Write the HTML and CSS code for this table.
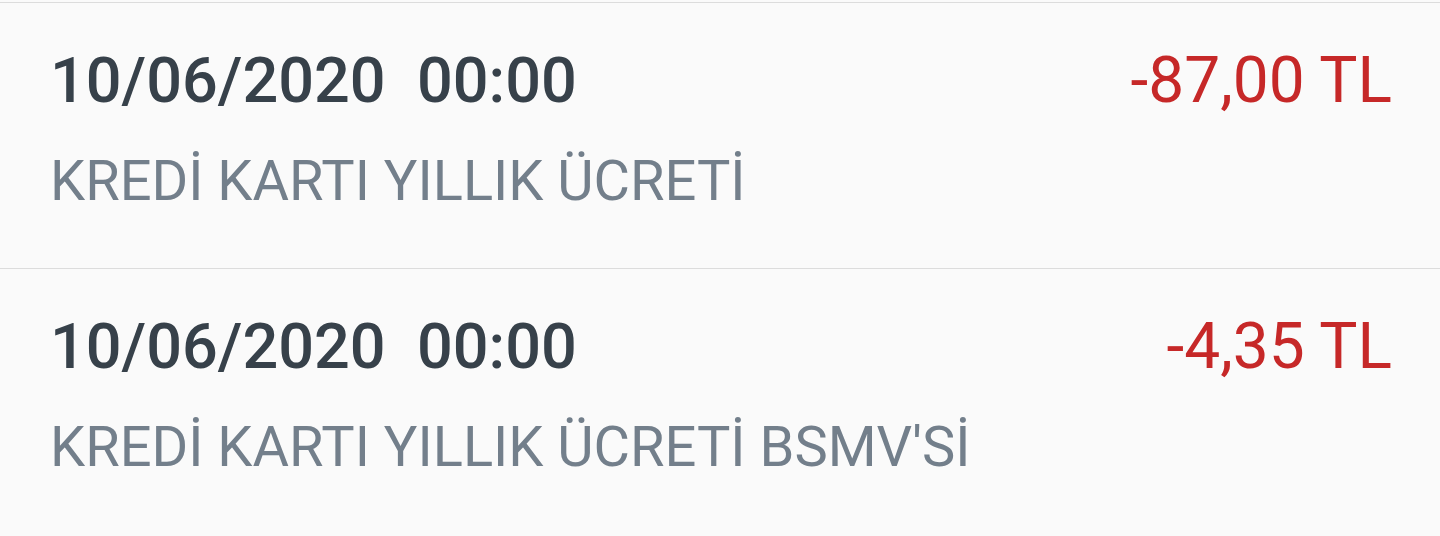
FILE: index.html
```html
<!DOCTYPE html>
<html lang="tr">
<head>
<meta charset="utf-8">
<link rel="stylesheet" href="styles.css">
</head>
<body>
<ul class="list">
  <li class="row">
    <div class="top">
      <span class="date">10/06/2020&nbsp; 00:00</span>
      <span class="amount">-87,00 TL</span>
    </div>
    <div class="desc">KREDİ KARTI YILLIK ÜCRETİ</div>
  </li>
  <li class="row">
    <div class="top">
      <span class="date">10/06/2020&nbsp; 00:00</span>
      <span class="amount">-4,35 TL</span>
    </div>
    <div class="desc">KREDİ KARTI YILLIK ÜCRETİ BSMV'Sİ</div>
  </li>
</ul>
</body>
</html>
```
FILE: styles.css
```css
html, body {
  margin: 0;
  padding: 0;
  background: #fafafa;
  font-family: Roboto, "Noto Sans", sans-serif;
}
.list {
  list-style: none;
  margin: 0;
  padding: 0;
  padding-top: 2px;
}
.row {
  height: 265px;
  border-top: 1px solid #dcdcdc;
  box-sizing: content-box;
  padding: 0 48px 0 50px;
  display: flex;
  flex-direction: column;
}
.top {
  display: flex;
  justify-content: space-between;
  align-items: baseline;
  margin-top: 39px;
  height: 78px;
  line-height: 78px;
}
.date {
  font-size: 63px;
  font-weight: 500;
  color: #37414a;
}
.amount {
  font-size: 64px;
  font-weight: 400;
  color: #c62828;
}
.desc {
  margin-top: 28px;
  font-size: 56px;
  line-height: 66px;
  color: #737f8b;
}
```
